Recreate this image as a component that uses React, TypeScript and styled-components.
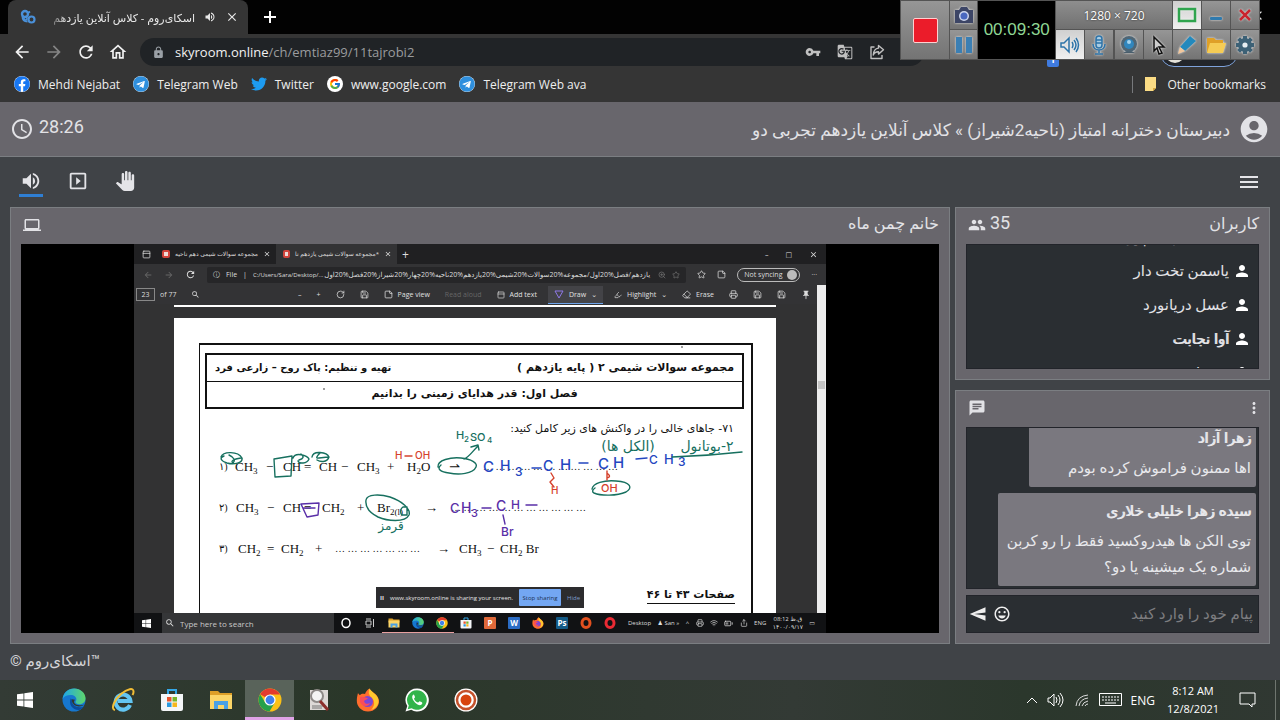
import React from 'react';
import styled, { createGlobalStyle, css } from 'styled-components';
import {
  MdAccessTime, MdAccountCircle, MdArrowBack, MdArrowForward, MdChat, MdClose, MdLaptop, MdLock,
  MdMenu, MdMoreVert, MdOutlineEmojiEmotions, MdOutlineHome, MdOutlineSlideshow, MdPanTool,
  MdPeople, MdPerson, MdPushPin, MdRefresh, MdSearch, MdSend, MdVolumeUp, MdVpnKey, MdGTranslate,
} from 'react-icons/md';
import { FaFacebook, FaTelegram, FaTwitter } from 'react-icons/fa';
import { FcGoogle } from 'react-icons/fc';
import {
  Eraser, Highlighter, Printer, RotateCw, Save, Share, Star, StickyNote, PanelTop, BatteryMedium, Wifi, ZoomIn,
} from 'lucide-react';

const Global = createGlobalStyle`
  *, *::before, *::after { box-sizing: border-box; }
  html, body, #root { height: 100%; margin: 0; }
  body { background: #404347; }
  button { padding: 0; border: 0; background: none; color: inherit; font: inherit; display: inline-flex; align-items: center; justify-content: center; }
  a { color: inherit; text-decoration: none; }
  svg { display: block; flex: none; }
`;

const ui = css`font-family: "Open Sans", "DejaVu Sans", sans-serif;`;
const sky = css`font-family: Roboto, "DejaVu Sans", sans-serif;`;

const Screen = styled.div`
  display: flex; flex-direction: column; height: 100vh; position: relative; overflow: hidden;
`;

/* ---------- browser chrome ---------- */
const TabStrip = styled.div`
  ${ui} display: flex; align-items: flex-end; flex: none; height: 34px; padding-left: 8px; background: #020202; color: #e8e8e8;
`;
const Tab = styled.div`
  display: flex; align-items: center; width: 240px; height: 34px; padding: 0 8px 0 12px;
  border-radius: 8px 8px 0 0; background: #353535; font-size: 11px;
`;
const TabTitle = styled.span`
  flex: 1; margin: 0 9px 0 8px; direction: rtl; white-space: nowrap; overflow: hidden;
  mask-image: linear-gradient(90deg, transparent, #000 24px);
`;
const TabButton = styled.button`width: 16px; height: 16px; margin-left: 8px; font-size: 14px;`;
const NewTab = styled.button`width: 32px; height: 34px; margin-left: 6px; font-size: 20px; color: #fff;`;
const WindowClose = styled.button`width: 45px; height: 30px; margin-left: auto; font-size: 15px; align-self: flex-start;`;

const NavBar = styled.div`
  ${ui} display: flex; align-items: center; flex: none; height: 36px; padding: 0 42px 0 12px; background: #353535; color: #eee;
`;
const NavButton = styled.button<{ $dim?: boolean }>`
  width: 20px; height: 28px; margin-right: 12px; font-size: 20px; color: ${p => (p.$dim ? '#858585' : '#f1f1f1')};
`;
const Address = styled.div`
  display: flex; align-items: center; flex: 0 1 784px; height: 28px; padding: 0 39px 0 12px; gap: 10px;
  border-radius: 14px; background: #202326; color: #9aa0a6; font-size: 13px;
`;
const Url = styled.span`flex: 1; b { font-weight: 400; color: #f1f1f1; } color: #9a9c9e;`;
const AddressIcons = styled.span`display: flex; gap: 16px; font-size: 16px; color: #c0c0c0;`;
const Extension = styled.span`
  width: 12px; height: 14px; margin: 16px 0 0 auto; border-radius: 2px; background: #3f7be0; color: #fff;
  font-size: 9px; line-height: 13px; text-align: center; font-weight: 700;
`;
const ProfilePill = styled.span`
  width: 78px; height: 28px; margin: 2px 0 0 101px; border: 1px solid #7fa3dc; border-radius: 14px; background: #23262b;
  &::before { content: ''; display: block; width: 20px; height: 20px; margin: 3px 4px; border-radius: 50%; background: #e6e3da; }
`;
const Bookmarks = styled.nav`
  ${ui} display: flex; align-items: center; flex: none; height: 32px; padding: 0 14px 4px; background: #353535; color: #eee; font-size: 12px;
`;
const Bookmark = styled.a`
  display: flex; align-items: center; gap: 8px; margin-right: 13px; white-space: nowrap;
  svg { width: 16px; height: 16px; }
`;
const Round = styled.span<{ $pad?: number }>`
  display: block; padding: ${p => p.$pad || 0}px; border-radius: 50%; background: #fff;
  svg { width: ${p => 16 - 2 * (p.$pad || 0)}px; height: ${p => 16 - 2 * (p.$pad || 0)}px; }
`;
const OtherBookmarks = styled(Bookmark)`
  margin: 0 0 0 auto; padding-left: 10px; border-left: 1px solid #77797c;
`;

/* ---------- screen recorder window ---------- */
const Recorder = styled.div`
  ${ui} position: absolute; top: 0; right: 20px; z-index: 5; width: 360px; height: 60px; padding: 1px; display: grid;
  grid-template-columns: 48px 27px 77px repeat(7, 28px); grid-template-rows: 28px 29px; gap: 1px;
  background: #545454; justify-content: space-between;
`;
const RecButton = styled.button<{ $lit?: boolean; $tall?: boolean }>`
  grid-row: ${p => (p.$tall ? 'span 2' : 'auto')};
  background: ${p => (p.$lit ? 'linear-gradient(#d0d0d0, #f0f0f0)' : 'linear-gradient(#969696, #747474)')};
  svg { width: 20px; height: 20px; filter: drop-shadow(0 0 1px #eee); }
`;
const StopSquare = styled.span`width: 25px; height: 25px; background: #eb1c2a; border: 1px solid #ffd0d0; border-radius: 2px;`;
const Timer = styled.time`
  grid-row: span 2; display: flex; align-items: center; justify-content: center; background: #000; color: #8fd694;
  font: 17px "Liberation Sans", sans-serif;
`;
const SizeLabel = styled.span`
  grid-column: span 4; display: flex; align-items: center; justify-content: center; color: #fff; font-size: 12px;
  background: linear-gradient(#8e8e8e, #707070); text-shadow: 0 0 2px #222;
`;

/* ---------- class room ---------- */
const Header = styled.header`
  ${sky} display: flex; align-items: center; justify-content: space-between; flex: none; height: 55px; padding: 0 10px;
  background: #68666c; border-bottom: 1px solid #7b7e82; color: #e2e2e6;
`;
const Elapsed = styled.span`
  display: flex; align-items: center; gap: 5px; font-size: 18px; line-height: 24px;
  svg { width: 24px; height: 24px; } span { padding-bottom: 4px; }
`;
const RoomTitle = styled.h1`
  display: flex; align-items: center; gap: 8px; margin: 0; font-size: 17px; font-weight: 400; white-space: nowrap;
  direction: rtl; svg { width: 32px; height: 32px; } span { padding-top: 2px; }
`;
const Tools = styled.div`
  display: flex; align-items: center; flex: none; height: 50px; padding: 0 19px; background: #404347; color: #e4e4e8;
`;
const ToolButton = styled.button<{ $active?: boolean }>`
  width: 24px; height: 30px; margin-right: 23px; border-bottom: 3px solid ${p => (p.$active ? '#2f7fd4' : 'transparent')};
  font-size: 22px;
`;
const MenuButton = styled.button`margin-left: auto; font-size: 24px;`;
const Main = styled.main`
  flex: 1; display: grid; grid-template-columns: minmax(0, 1fr) 315px; grid-template-rows: minmax(0, 1fr); gap: 5px; min-height: 0; padding: 0 10px;
`;
const Panel = styled.section<{ $grow?: boolean }>`
  ${sky} display: flex; flex-direction: column; flex: ${p => (p.$grow ? '1' : 'none')}; min-height: 0; padding: 0 10px 10px;
  border: 1px solid #7b7e82; background: #68666c; color: #e2e2e6;
`;
const PanelHead = styled.div`
  display: flex; align-items: center; justify-content: space-between; height: 36px; flex: none; padding: 0 0 3px 2px; font-size: 17px;
`;
const PanelTitle = styled.h2`margin: 0; padding-bottom: 2px; font-size: 16px; font-weight: 400;`;
const Count = styled.span`
  display: flex; align-items: center; gap: 4px; font-size: 18px; line-height: 22px;
  svg { width: 18px; height: 18px; } span { padding-bottom: 4px; }
`;
const Side = styled.div`display: flex; flex-direction: column; gap: 10px; min-height: 0;`;
const UserList = styled.ul`
  display: flex; flex-direction: column; justify-content: center; height: 125px; margin: 0; padding: 0 7px 4px;
  border: 1px solid #22242a; background: #2a2e32; overflow: hidden; list-style: none; direction: rtl;
`;
const User = styled.li<{ $me?: boolean }>`
  display: flex; align-items: center; flex: none; gap: 4px; height: 34px; font-size: 15px;
  text-shadow: ${p => (p.$me ? '1px 0 currentColor' : 'none')};
  svg { width: 18px; height: 18px; color: #fff; }
`;
const IconButton = styled.button<{ $w: number }>`width: ${p => p.$w}px; font-size: 18px;`;
const Messages = styled.div`
  flex: 1; display: flex; flex-direction: column; justify-content: flex-end; align-items: flex-end; gap: 6px; min-height: 0;
  padding: 0 2px 2px; overflow: hidden; border: 1px solid #22242a; background: #2a2e32;
`;
const Bubble = styled.article<{ $wide?: boolean }>`
  flex: none; width: ${p => (p.$wide ? 258 : 227)}px; padding: 5px 5px 6px; border-radius: 2px; background: #7a787f; direction: rtl;
  font-size: 15px; line-height: 26px; white-space: nowrap; color: #e8e8ec;
  strong { display: block; margin-bottom: 4px; font-weight: 400; text-shadow: 1px 0 currentColor; }
`;
const Compose = styled.form`
  display: flex; align-items: center; gap: 6px; height: 38px; flex: none; margin-top: 6px; padding: 0 2px;
  border: 1px solid #22242a; background: #2a2e32; color: #eee; font-size: 18px;
`;
const MessageInput = styled.input`
  ${sky} flex: 1; min-width: 0; height: 30px; padding: 0 3px; border: 0; background: none; outline: 0; direction: rtl; color: #eee;
  font-size: 15px; &::placeholder { color: #7d7d80; opacity: 1; }
`;
const Flip = styled.span`display: flex; transform: scaleX(-1);`;
const Footer = styled.footer`${sky} flex: none; height: 36px; padding: 0 10px; line-height: 34px; font-size: 15px; color: #d4d4d8;`;

/* ---------- shared desktop ---------- */
const Video = styled.div`flex: 1; display: flex; justify-content: center; min-height: 0; background: #000; overflow: hidden;`;
const Shared = styled.div`
  ${ui} position: relative; display: flex; flex-direction: column; width: 692px; max-width: 100%; background: #323233;
  color: #ddd; font-size: 7px; white-space: nowrap; overflow: hidden;
`;
const EdgeTabs = styled.div`
  display: flex; align-items: center; height: 20px; flex: none; padding: 0 8px; background: #202022;
`;
const EdgeTab = styled.div<{ $on?: boolean }>`
  display: flex; align-items: center; gap: 5px; width: 121px; height: 20px; padding: 0 5px 0 7px; font-size: 6px;
  background: ${p => (p.$on ? '#333335' : 'transparent')};
  span { flex: 1; direction: rtl; }
`;
const FirstTab = styled(EdgeTab)`margin-left: 4px;`;
const AddTab = styled.button`margin: 0 auto 0 5px; font-size: 12px;`;
const WinControls = styled.span`display: flex; align-items: center; gap: 17px;`;
const Pdf = styled.i`width: 8px; height: 8px; border-radius: 2px; background: #f0dcd8; border: 2px solid #d2443c;`;
const Push = styled.span`margin-left: auto;`;
const EdgeBar = styled.div`
  display: flex; align-items: center; gap: 11px; height: 21px; flex: none; padding: 0 9px; background: #333335;
`;
const EdgeUrl = styled.div`
  flex: 1; display: flex; align-items: center; gap: 6px; height: 16px; padding: 0 6px; border-radius: 2px; background: #262628;
  small { font-size: 6px; } bdi { margin: 0 auto 0 -5px; }
`;
const Sync = styled.button`
  height: 14px; padding: 0 2px 0 6px; gap: 5px; border: 1px solid #bbb; border-radius: 7px;
  i { width: 10px; height: 10px; border-radius: 50%; background: #bbb; }
`;
const Reader = styled.div`position: relative; flex: 1; display: flex; min-height: 0;`;
const ReaderBody = styled.div`flex: 1; min-width: 0; display: flex; flex-direction: column; overflow: hidden;`;
const PdfBar = styled.div`
  display: flex; align-items: center; gap: 15px; height: 19px; flex: none; padding: 0 6px 0 2px; background: #333335;
`;
const PageNo = styled.input`
  width: 19px; height: 13px; margin-right: -10px; padding: 0; border: 1px solid #888; background: none; color: #ddd; text-align: center; font: inherit;
`;
const PdfTool = styled.button<{ $on?: boolean; $dim?: boolean }>`
  gap: 5px; height: 18px; padding: 0 ${p => (p.$on ? 6 : 0)}px; margin: 0 ${p => (p.$on ? -4 : 0)}px; color: ${p => (p.$dim ? '#666' : '#e0e0e0')};
  background: ${p => (p.$on ? '#434347' : 'none')}; border-bottom: ${p => (p.$on ? '1px solid #6ea4ea' : '0')};
`;
const Scroll = styled.div`
  display: flex; width: 9px; background: #ededed; padding: 96px 1px 0;
  &::before { content: ''; width: 7px; height: 8px; background: #c4c4c4; }
`;
const PrevPage = styled.div`height: 2px; flex: none; margin: 1px 41px 11px 40px; background: #fff;`;
const Sheet = styled.div`flex: 1; margin: 0 41px 0 40px; padding: 25px 23px 0 25px; background: #fff; color: #111; min-height: 0;`;
const Frame = styled.div`height: 100%; padding: 8px 7px 0 5px; border: solid #111; border-width: 2px 2px 0 1px;`;
const TitleBox = styled.div`border: 2px solid #111; font: 700 11px "DejaVu Sans", sans-serif; direction: rtl;`;
const TitleRow = styled.div<{ $center?: boolean }>`
  display: flex; align-items: center; justify-content: ${p => (p.$center ? 'center' : 'space-between')}; height: 26px; padding: 0 8px 2px;
  & + & { border-top: 1px solid #111; }
  small { font-size: 10px; }
`;
const Question = styled.p`margin: 6px 10px 0; font: 11px/28px "DejaVu Sans", sans-serif; direction: rtl;`;
const Equations = styled.div`display: flex; flex-direction: column; gap: 21px; margin: 14px 0 27px 14px;`;
const Equation = styled.div<{ $cols: string }>`
  display: grid; grid-template-columns: ${p => p.$cols}; height: 20px; line-height: 20px;
  font-family: "Liberation Serif", "DejaVu Sans", serif; font-size: 13px;
  sub { font-size: 9px; line-height: 0; vertical-align: -3px; }
`;
const Dots = styled.span`font-size: 10px;`;
const Pages = styled.p`margin: 0 9px 0 0; text-align: right; direction: rtl; font: 700 11px/18px "DejaVu Sans", sans-serif; span { border-bottom: 1px solid #111; padding-bottom: 2px; }`;
const Ink = styled.svg`position: absolute; left: 0; top: 0; width: 692px; height: 389px; pointer-events: none;`;
const ShareBar = styled.div`
  position: absolute; left: 242px; top: 343px; display: flex; align-items: center; gap: 6px; width: 208px; height: 21px; padding: 0 4px;
  background: #2c2c2e; color: #e6e6e6; font-size: 6px;
`;
const StopShare = styled.button`width: 52px; height: 17px; margin-left: auto; background: #73a7f3; color: #1d3050; border-radius: 1px;`;
const Hide = styled.button`width: 14px; color: #7e9ccc;`;
const MiniTaskbar = styled.div`
  display: flex; align-items: center; height: 20px; flex: none; background: #111214; padding-left: 8px; color: #ddd;
`;
const MiniSearch = styled.label`
  display: flex; align-items: center; gap: 5px; width: 172px; height: 20px; margin-left: 11px; padding: 0 3px; background: #353638;
  input { ${ui} width: 130px; padding: 0; border: 0; background: none; font-size: 8px; &::placeholder { color: #c8c8c8; opacity: 1; } }
`;
const MiniApp = styled.button<{ $open?: boolean }>`
  width: 24px; height: 20px; flex: none; border-bottom: 1px solid ${p => (p.$open ? '#e8a0a0' : 'transparent')};
  svg { width: 12px; height: 12px; }
`;
const MiniTray = styled.div`display: flex; align-items: center; flex: 1; justify-content: space-between; padding: 0 11px 0 6px; font-size: 6px;`;
const MiniClock = styled.span`line-height: 8px; text-align: center;`;

/* ---------- windows taskbar ---------- */
const Taskbar = styled.div`
  font-family: "Open Sans", sans-serif; display: flex; align-items: center; height: 40px; flex: none; padding-right: 4px;
  background: linear-gradient(90deg, #333b35, #2a3729 28%, #333a35 62%, #2b372c 80%, #303832); color: #fff;
`;
const App32 = styled.button<{ $on?: boolean }>`
  width: 49px; height: 40px; border-bottom: 3px solid ${p => (p.$on ? '#e0a3e8' : 'transparent')};
  border-top: 3px solid transparent; background: ${p => (p.$on ? '#59635a' : 'none')};
  svg { width: 24px; height: 24px; }
`;
const Tray = styled.div`
  display: flex; align-items: center; margin-left: auto; gap: 9px; height: 40px; padding-right: 19px; border-right: 1px solid #6f766f; font-size: 12px;
`;
const Clock = styled.time`width: 66px; margin: 0 4px 0 -4px; text-align: center; line-height: 18px; font-size: 11px;`;

/* ---------- drawings ---------- */
const SkyroomLogo = () => (
  <svg width="16" height="16" viewBox="0 0 16 16" fill="none" stroke="#4a90d9">
    <circle cx="5" cy="5" r="3" strokeWidth="2.400" /><circle cx="11.500" cy="10.500" r="3" strokeWidth="2.200" />
    <path d="M2.500 7c0 3.500 2 5.500 5 5.500M8 4l2-1.500" strokeWidth="2" /><circle cx="5.500" cy="9.500" r="1.500" strokeWidth="1.500" />
  </svg>
);
const ShareArrow = () => (
  <svg width="16" height="16" viewBox="0 0 16 16" fill="none" stroke="#c0c0c0" strokeWidth="1.400" strokeLinejoin="round">
    <path d="M5.500 3H2v11.500h11V11M9.500 1.500l5 4.300-5 4.300V7.700C7 7.600 5.300 8.600 4.300 11c.2-3.800 2-6.500 5.200-6.900z" />
  </svg>
);
const Win = ({ s = 16 }: { s?: number }) => (
  <svg style={{ width: s, height: s }} viewBox="0 0 16 16" fill="#fff"><path d="M0 2.300 6.500 1.400v6.200H0zM7.300 1.300 16 0v7.600H7.300zM0 8.400h6.500v6.200L0 13.700zM7.300 8.400H16V16l-8.700-1.200z" /></svg>
);
const Edge = () => (
  <svg viewBox="0 0 24 24">
    <defs><linearGradient id="eg" x1="0" x2="1"><stop stopColor="#1ea6e8" /><stop offset="1" stopColor="#5fd66b" /></linearGradient></defs>
    <circle cx="12" cy="12" r="11.500" fill="#1677cf" />
    <path d="M.6 11C1.500 4.500 6.500.5 12.200.5 18.500.5 23.500 5 23.500 10.200c0 3.600-2.600 6-6 6-2.600 0-4.200-1-4-2.200.3-1 .9-1.300.9-2.700C14.400 9 12 7 8.800 7 5 7 1.800 8.600.6 11z" fill="url(#eg)" />
    <path d="M8.600 10.500c-2.300 6 2 11.500 8 11.400 2.200-.1 4.200-1.800 5.200-3.500-6 2.600-12.800-.8-11.800-6.800z" fill="#0c4c9c" />
    <path d="M10 11.200c-.6 2.500 1 6.500 6.500 7.200 2.600.2 4.600-.8 5.800-2-1.400.7-3 .8-4.800.8-4.200 0-7-2.600-4.500-5.400z" fill="#30382f" />
  </svg>
);
const Explorer = () => (
  <svg viewBox="0 0 24 24"><path d="M1 3h8l2 2h12v6H1z" fill="#dd9f28" /><path d="M1 7h22v14H1z" fill="#fbd568" /><path d="M5 13h14v8h-4v-4H9v4H5z" fill="#4aa0e4" /></svg>
);
const Chrome = () => (
  <svg viewBox="0 0 24 24">
    <circle cx="12" cy="12" r="11.500" fill="#fbc116" /><path d="M12 12 2.100 6.200A11.500 11.500 0 0 1 22 6.500H12z" fill="#e33b2e" />
    <path d="M2.100 6.200A11.500 11.500 0 0 0 11.500 23.500L16.500 15 7.200 14.500z" fill="#25a04b" />
    <circle cx="12" cy="12" r="5.600" fill="#fff" /><circle cx="12" cy="12" r="4.400" fill="#3f80ea" />
  </svg>
);
const Firefox = () => (
  <svg viewBox="0 0 24 24">
    <path d="M2 5c.5 1 1.400 1.500 1.800 2.200C6 5 8 6 9 6c1-3 3-4.600 4.500-5.500C14 4 22 5 23 12.500c.4 6-4.500 11-11 11S.6 18.500.8 12.500C.9 9 1.500 7 2 5z" fill="#ff6d2d" />
    <path d="M13.500.5C16 5 23 7 22.500 14c-.5 4-3.500 7-7.500 8 4-4 4-9 1-12-2-2-4.500-4-2.500-9.500z" fill="#ffc72e" />
    <circle cx="11.500" cy="13.500" r="5.500" fill="#7a46d6" /><path d="M4 9c3-1 5 .5 8 1-1 2-3 1.500-4 3 .5 3 4 3.500 6 2-1 4-8 4-10-1z" fill="#f94d59" />
  </svg>
);
const Store = () => (
  <svg viewBox="0 0 24 24"><path d="M8 6V2h8v4" fill="none" stroke="#35a8e8" strokeWidth="2" /><path d="M1 6h22v15q0 2-2 2H3q-2 0-2-2z" fill="#f4f6f8" /><path d="M7 9h4.500v4.500H7z" fill="#e8532b" /><path d="M12.500 9H17v4.500h-4.500z" fill="#75b52a" /><path d="M7 14.500h4.500V19H7z" fill="#2a9ae0" /><path d="M12.500 14.500H17V19h-4.500z" fill="#f6b71c" /></svg>
);
const Explorer11 = () => (
  <svg viewBox="0 0 24 24" fill="none">
    <path d="M19 17A7.500 7.500 0 1 1 19.500 13H7" stroke="#63c6f3" strokeWidth="4" />
    <path d="M4 22C-1 21 4 11 10 6S23-1 22.500 4c0 1-.4 2-1 3" stroke="#f2bd35" strokeWidth="2" />
  </svg>
);
const Magnify = () => (
  <svg viewBox="0 0 24 24"><path d="M3 2h18v20H3z" fill="#ddd9d7" /><path d="M5 18h14M5 20h10" stroke="#777" /><circle cx="10" cy="8" r="6" fill="#f4f4f4" stroke="#8e8a88" strokeWidth="2" /><path d="m13 13 8 9" stroke="#8c2f2c" strokeWidth="3" /></svg>
);
const RecordLogo = () => (
  <svg viewBox="0 0 24 24"><circle cx="12" cy="12" r="11.500" fill="#fff" /><circle cx="12" cy="12" r="9" fill="none" stroke="#c4512b" strokeWidth="2.500" /><circle cx="12" cy="12" r="5.500" fill="#d8440e" /></svg>
);
const WhatsApp = () => (
  <svg viewBox="0 0 24 24"><path d="M12 .5A11.400 11.400 0 0 0 2.300 18L.5 23.500l5.800-1.700A11.500 11.500 0 1 0 12 .5z" fill="#fff" /><path d="M12 2.200A9.800 9.800 0 0 0 3.800 17.500l-1.100 3.800 3.900-1.100A9.800 9.800 0 1 0 12 2.200z" fill="#32b44b" /><path d="M8.600 6.600c-3 2-.6 6.300 2.200 8.700 2.800 2.300 5.500 2.800 6.600 0 .2-1-1.500-1.600-2.600-2.100-.8-.2-1.100 1.500-1.900 1.300-1.700-.7-3-2-3.800-3.600-.1-.7 1-1 .9-1.800-.4-1-.7-2.400-1.400-2.500z" fill="#fff" /></svg>
);
const Letter = ({ t, c }: { t: string; c: string }) => (
  <svg viewBox="0 0 12 12"><rect width="12" height="12" rx="1" fill={c} /><text x="6" y="9" fontSize="8" fontWeight="700" textAnchor="middle" fill="#fff">{t}</text></svg>
);
const Ring = ({ c, w = 3 }: { c: string; w?: number }) => (
  <svg viewBox="0 0 12 12"><ellipse cx="6" cy="6" rx="4" ry="4.500" fill="none" stroke={c} strokeWidth={w} /></svg>
);

const G = '#17705f', B = '#2346c0', R = '#d5412c', P = '#5a2fa8';
type Mark = [string, number, number, number, string];
const marks: Mark[] = [
  ['H', 456, 439, 11, G], ['2', 464, 442, 8, G], ['SO', 470, 441, 11, G], ['4', 487, 443, 8, G],
  ['H', 395, 459, 10, R], ['OH', 415, 459, 10, R],
  ['C', 483, 472, 15, B], ['H', 500, 471, 14, B], ['3', 515, 476, 12, B], ['C', 543, 471, 14, B], ['H', 560, 470, 15, B],
  ['C', 598, 469, 15, B], ['H', 613, 468, 15, B], ['C', 649, 464, 12, B], ['H', 664, 464, 13, B], ['3', 678, 466, 12, B],
  ['H', 551, 494, 10, R], ['OH', 601, 492, 11, R],
  ['C', 450, 513, 13, P], ['H', 461, 513, 14, P], ['3', 471, 517, 11, P], ['C', 496, 511, 14, P], ['H', 511, 509, 12, P], ['Br', 501, 536, 12, P],
];

const Annotations = () => (
  <Ink viewBox="134 244 692 389" fill="none" strokeWidth="1.400" strokeLinecap="round" strokeLinejoin="round">
    <g fontFamily="Inter, sans-serif" fontWeight="500">
      {marks.map(([t, x, y, s, c], i) => <text key={i} x={x} y={y} fontSize={s} fill={c}>{t}</text>)}
    </g>
    <g fontFamily="DejaVu Sans" fill={G} textAnchor="middle" direction="rtl">
      <text x="628" y="451" fontSize="14">(الکل ها)</text>
      <text x="707" y="451" fontSize="14">۲-بوتانول</text>
      <text x="391" y="530" fontSize="12">قرمز</text>
    </g>
    <g stroke={G}>
      <path d="M672 457q35-1 70-5M221 457c2-6 17-6 21 1 1 5-8 7-15 5-6-2-8-5-3-7M229 455q8 4 4 8-4-3 8-5" />
      <path d="m274 459 18-3-1 20-16 1zM293 458c2-6 14-3 16 1-2 5-10 5-11 2M301 454q5 4-2 6M312 457c1-7 15-5 17 0-2 6-9 5-12 3M320 453q-6 6-1 5l9-1" />
      <path d="M438 467c-1-7 13-10 23-9s17 5 15 9c-3 7-17 8-27 6-8-1-13-4-8-8M464 459c4-1 7-6 14-13m-7 1 7-2 1 5" />
      <path d="M592 489c1-6 12-9 24-8 15 1 17 7 10 11-9 4-25 4-32 1-2-1-2-3 1-5" />
      <path d="M366 500c1-6 14-6 24-3 12 4 21 12 19 18-4 8-22 6-31 2-8-4-13-10-12-17M403 507h4v8h-5c-2-2-2-6 1-8" />
    </g>
    <path d="M532 468h9M579 463h9M636 459l11-1" stroke={B} />
    <path d="M405 456h7M551 473l3 5-4 4 4 5M607 471v9m0-7q5 4 0 5" stroke={R} />
    <path d="m301 504 18-1-1 12-11 2zM304 508h11M482 508h9M526 505h11M503 515l2 9" stroke={P} />
    <circle cx="682" cy="347" r=".8" fill="#222" /><circle cx="324" cy="389" r=".8" fill="#222" />
  </Ink>
);

const SharedDesktop = () => (
  <Shared>
    <EdgeTabs>
      <PanelTop size={9} />
      <FirstTab><Pdf /><span>مجموعه سوالات شیمی دهم ناحیه</span><MdClose size={8} /></FirstTab>
      <EdgeTab $on><Pdf /><span>*مجموعه سوالات شیمی یازدهم نا</span><MdClose size={8} /></EdgeTab>
      <AddTab>+</AddTab>
      <WinControls><span>–</span><span>□</span><MdClose size={9} /></WinControls>
    </EdgeTabs>
    <EdgeBar>
      <MdArrowBack size={10} color="#666" /><MdArrowForward size={10} color="#666" /><MdRefresh size={11} />
      <EdgeUrl>
        <span>ⓘ</span><span>File</span><span>|</span><small>C:/Users/Sara/Desktop/...</small>
        <bdi dir="rtl">یازدهم/فصل%20اول/مجموعه%20سوالات%20شیمی%20یازدهم%20ناحیه%20چهار%20شیراز%20فصل%20اول</bdi>
        <ZoomIn size={8} color="#777" /><Star size={8} color="#777" />
      </EdgeUrl>
      <Star size={9} /><StickyNote size={9} /><Sync>Not syncing <i /></Sync><span>···</span>
    </EdgeBar>
    <Reader>
      <ReaderBody>
        <PdfBar>
          <PageNo aria-label="Page" defaultValue="23" /><span>of 77</span><MdSearch size={9} />
          <Push>–</Push><span>+</span><RotateCw size={9} /><Save size={9} />
          <PdfTool><StickyNote size={9} /> Page view</PdfTool><PdfTool $dim>Read aloud</PdfTool>
          <PdfTool><PanelTop size={8} /> Add text</PdfTool><PdfTool $on><svg width="10" height="9" viewBox="0 0 10 9" fill="none" stroke="#8f78e8"><path d="M1 1h8L5 8z" /></svg> Draw <span>⌄</span></PdfTool>
          <PdfTool><Highlighter size={8} /> Highlight <span>⌄</span></PdfTool><PdfTool><Eraser size={9} /> Erase</PdfTool>
          <Printer size={9} /><Save size={9} /><Save size={9} /><MdPushPin size={10} />
        </PdfBar>
        <PrevPage />
        <Sheet>
          <Frame>
            <TitleBox>
              <TitleRow><span>مجموعه سوالات شیمی ۲ ( پایه یازدهم )</span><small>تهیه و تنظیم: پاک روح – زارعی فرد</small></TitleRow>
              <TitleRow $center>فصل اول: قدر هدایای زمینی را بدانیم</TitleRow>
            </TitleBox>
            <Question>۷۱- جاهای خالی را در واکنش های زیر کامل کنید:</Question>
            <Equations>
              <Equation $cols="16px 31px 17px 21px 15px 22px 16px 30px 20px 42px 34px 1fr">
                <Dots>۱)</Dots><span>CH<sub>3</sub></span><span>−</span><span>CH</span><span>=</span><span>CH</span><span>−</span><span>CH<sub>3</sub></span><span>+</span><span>H<sub>2</sub>O</span><span>⇀</span><Dots>… … … … … … … … … … …</Dots>
              </Equation>
              <Equation $cols="17px 31px 16px 21px 18px 35px 20px 48px 26px 1fr">
                <Dots>۲)</Dots><span>CH<sub>3</sub></span><span>−</span><span>CH</span><span>=</span><span>CH<sub>2</sub></span><span>+</span><span>Br<sub>2(l)</sub></span><span>→</span><Dots>… … … … … … … … … … …</Dots>
              </Equation>
              <Equation $cols="19px 29px 14px 34px 20px 102px 22px 28px 13px 1fr">
                <Dots>۳)</Dots><span>CH<sub>2</sub></span><span>=</span><span>CH<sub>2</sub></span><span>+</span><Dots>… … … … … … …</Dots><span>→</span><span>CH<sub>3</sub></span><span>−</span><span>CH<sub>2</sub> Br</span>
              </Equation>
            </Equations>
            <Pages><span>صفحات ۴۳ تا ۴۶</span></Pages>
          </Frame>
        </Sheet>
      </ReaderBody>
      <Scroll />
    </Reader>
    <MiniTaskbar>
      <Win s={9} />
      <MiniSearch><MdSearch size={10} /><input aria-label="Search" placeholder="Type here to search" /></MiniSearch>
      <MiniApp><Ring c="#fff" w={1.5} /></MiniApp><MiniApp><svg viewBox="0 0 12 12" stroke="#ccc" fill="none"><path d="M2 4h5v4H2zM2 2h5M2 10h5M9.500 2v8" /></svg></MiniApp>
      <MiniApp $open><Explorer /></MiniApp><MiniApp $open><Edge /></MiniApp><MiniApp $open><Chrome /></MiniApp><MiniApp><Store /></MiniApp>
      <MiniApp><Letter t="P" c="#e0693a" /></MiniApp><MiniApp><Letter t="W" c="#2b6cc4" /></MiniApp><MiniApp><Firefox /></MiniApp>
      <MiniApp><Letter t="Ps" c="#135a86" /></MiniApp><MiniApp><Ring c="#e2501f" /></MiniApp><MiniApp><Ring c="#ea2a33" /></MiniApp>
      <MiniTray><span>Desktop</span><span>♟ San »</span><span>^</span><Printer size={8} /><Wifi size={8} /><BatteryMedium size={9} /><Share size={8} /><span>ENG</span><MiniClock>08:12 ق.ظ<br />۱۴۰۰/۰۹/۱۷</MiniClock><span>▭</span></MiniTray>
    </MiniTaskbar>
    <Annotations />
    <ShareBar><b>II</b><span>www.skyroom.online is sharing your screen.</span><StopShare>Stop sharing</StopShare><Hide>Hide</Hide></ShareBar>
  </Shared>
);

const users = ['فاطمه مهدی پور', 'یاسمن تخت دار', 'عسل دریانورد', 'آوا نجابت', 'مهسا محمدی حقیقت'];

const BlueStroke = ({ children }: { children: React.ReactNode }) => (
  <svg viewBox="0 0 20 20" fill="none" stroke="#2d73a8" strokeWidth="1.500">{children}</svg>
);

export default function App() {
  return (
    <Screen>
      <Global />
      <TabStrip>
        <Tab>
          <SkyroomLogo /><TabTitle>اسکای‌روم - کلاس آنلاین یازدهم</TabTitle><MdVolumeUp size={12} />
          <TabButton aria-label="Close tab"><MdClose /></TabButton>
        </Tab>
        <NewTab aria-label="New tab"><svg width="12" height="12" stroke="#fff" strokeWidth="2"><path d="M6 0v12M0 6h12" /></svg></NewTab>
        <WindowClose aria-label="Close window"><MdClose /></WindowClose>
      </TabStrip>
      <NavBar>
        <NavButton aria-label="Back"><MdArrowBack /></NavButton><NavButton $dim aria-label="Forward"><MdArrowForward /></NavButton>
        <NavButton aria-label="Reload"><MdRefresh /></NavButton><NavButton aria-label="Home"><MdOutlineHome /></NavButton>
        <Address>
          <MdLock size={13} /><Url><b>skyroom.online</b>/ch/emtiaz99/11tajrobi2</Url>
          <AddressIcons><MdVpnKey /><MdGTranslate /><ShareArrow /></AddressIcons>
        </Address>
        <Extension>i</Extension><ProfilePill />
      </NavBar>
      <Bookmarks>
        <Bookmark href="#"><Round><FaFacebook color="#1877f2" /></Round>Mehdi Nejabat</Bookmark>
        <Bookmark href="#"><Round><FaTelegram color="#2f8fdd" /></Round>Telegram Web</Bookmark>
        <Bookmark href="#"><FaTwitter color="#1d9bf0" />Twitter</Bookmark>
        <Bookmark href="#"><Round $pad={2}><FcGoogle /></Round>www.google.com</Bookmark>
        <Bookmark href="#"><Round><FaTelegram color="#2f8fdd" /></Round>Telegram Web ava</Bookmark>
        <OtherBookmarks href="#"><svg viewBox="0 0 16 16"><path d="M2 1h11v11l-3 3H2z" fill="#fbdc85" /><path d="M10 15v-3h3z" fill="#d9a93c" /></svg>Other bookmarks</OtherBookmarks>
      </Bookmarks>

      <Recorder>
        <RecButton $tall aria-label="Stop"><StopSquare /></RecButton>
        <RecButton aria-label="Snapshot"><svg viewBox="0 0 20 20"><path d="M1 5h4l2-3h6l2 3h4v13H1z" fill="#3c4566" /><circle cx="10" cy="11" r="5" fill="#cdd6ee" /><circle cx="10" cy="11" r="3.500" fill="#4a68c0" /></svg></RecButton>
        <Timer>00:09:30</Timer>
        <SizeLabel>1280 × 720</SizeLabel>
        <RecButton $lit aria-label="Area"><svg viewBox="0 0 20 20" fill="none"><path d="M2 4h16v12H2z" stroke="#2fa44e" strokeWidth="2.500" /></svg></RecButton>
        <RecButton aria-label="Minimise"><svg viewBox="0 0 20 20"><rect x="4" y="12" width="12" height="3" rx="1" fill="#2f7aae" /></svg></RecButton>
        <RecButton aria-label="Close"><svg viewBox="0 0 20 20" stroke="#c9242e" strokeWidth="2.500"><path d="m5 5 10 10M15 5 5 15" /></svg></RecButton>
        <RecButton aria-label="Pause"><svg viewBox="0 0 20 20" fill="#3b7fb4"><path d="M2 2h6v16H2zM12 2h6v16h-6z" /></svg></RecButton>
        <RecButton $lit aria-label="Sound"><BlueStroke><path d="M1 8h3l5-5v14l-5-5H1zM12 7q2 3 0 6M14 5q4 5 0 10M16 3q5 7 0 14" /></BlueStroke></RecButton>
        <RecButton aria-label="Microphone"><BlueStroke><rect x="7" y="1" width="6" height="12" rx="3" fill="#a9cde4" /><path d="M4 9c0 8 12 8 12 0M10 15v3M6 19h8M7 5h6M7 8h6" /></BlueStroke></RecButton>
        <RecButton aria-label="Webcam"><svg viewBox="0 0 20 20"><path d="M4 18q6-5 12 0z" fill="#4a5e6c" /><circle cx="10" cy="9" r="8" fill="#4f6675" /><circle cx="10" cy="9" r="5" fill="#3086bd" /><circle cx="10" cy="7" r="2" fill="#a4d3ec" /></svg></RecButton>
        <RecButton aria-label="Cursor"><svg viewBox="0 0 20 20" fill="#ccc" stroke="#111" strokeWidth="1.500"><path d="m6 2 10 10h-5l3 6-3 1-2-6-3 3z" /></svg></RecButton>
        <RecButton aria-label="Draw"><svg viewBox="0 0 20 20"><path d="M3 12 13 1l6 5L8 16z" fill="#2389bd" /><path d="m3 12-2 7 7-3z" fill="#f2c79c" /></svg></RecButton>
        <RecButton aria-label="Folder"><svg viewBox="0 0 20 20"><path d="M1 3h7l2 2h7v12H1z" fill="#dfa027" /><path d="M4 8h16l-3 10H1z" fill="#f5cc55" /></svg></RecButton>
        <RecButton aria-label="Settings"><svg viewBox="0 0 20 20" fill="none" stroke="#3d6176"><path d="M10 1v18M1 10h18M3.600 3.600l12.800 12.800M16.400 3.600 3.600 16.400" strokeWidth="4" /><circle cx="10" cy="10" r="5" strokeWidth="4" /><circle cx="10" cy="10" r="2.600" fill="#e6eef2" stroke="none" /></svg></RecButton>
      </Recorder>

      <Header>
        <Elapsed><MdAccessTime /><span>28:26</span></Elapsed>
        <RoomTitle><MdAccountCircle /><span>دبیرستان دخترانه امتیاز (ناحیه2شیراز) » کلاس آنلاین یازدهم تجربی دو</span></RoomTitle>
      </Header>
      <Tools>
        <ToolButton $active aria-label="Sound"><MdVolumeUp /></ToolButton><ToolButton aria-label="Play"><MdOutlineSlideshow /></ToolButton>
        <ToolButton aria-label="Raise hand"><MdPanTool size={20} /></ToolButton><MenuButton aria-label="Menu"><MdMenu /></MenuButton>
      </Tools>
      <Main>
        <Panel>
          <PanelHead><MdLaptop size={18} /><PanelTitle dir="rtl">خانم چمن ماه</PanelTitle></PanelHead>
          <Video><SharedDesktop /></Video>
        </Panel>
        <Side>
          <Panel>
            <PanelHead><Count><MdPeople /><span>35</span></Count><PanelTitle>کاربران</PanelTitle></PanelHead>
            <UserList>{users.map((u, i) => <User key={u} $me={i === 3}><MdPerson />{u}</User>)}</UserList>
          </Panel>
          <Panel $grow>
            <PanelHead><IconButton $w={18} aria-label="Chat"><MdChat /></IconButton><IconButton $w={10} aria-label="More"><MdMoreVert /></IconButton></PanelHead>
            <Messages>
              <Bubble><strong>زهرا آزاد</strong>اها ممنون فراموش کرده بودم</Bubble>
              <Bubble $wide><strong>سیده زهرا خلیلی خلاری</strong>توی الکن ها هیدروکسید فقط را رو کربن<br />شماره یک میشینه یا دو؟</Bubble>
            </Messages>
            <Compose>
              <button type="button" aria-label="Send"><Flip><MdSend /></Flip></button>
              <button type="button" aria-label="Emoji"><MdOutlineEmojiEmotions /></button>
              <MessageInput aria-label="پیام" placeholder="پیام خود را وارد کنید" />
            </Compose>
          </Panel>
        </Side>
      </Main>
      <Footer>© اسکای‌روم™</Footer>

      <Taskbar>
        <App32 aria-label="Start"><Win /></App32><App32 aria-label="Edge"><Edge /></App32><App32 aria-label="Internet Explorer"><Explorer11 /></App32>
        <App32 aria-label="Store"><Store /></App32><App32 aria-label="Files"><Explorer /></App32><App32 $on aria-label="Chrome"><Chrome /></App32>
        <App32 aria-label="Magnifier"><Magnify /></App32><App32 aria-label="Firefox"><Firefox /></App32>
        <App32 aria-label="WhatsApp"><WhatsApp /></App32>
        <App32 aria-label="Recorder"><RecordLogo /></App32>
        <Tray>
          <svg width="12" height="8" fill="none" stroke="#fff"><path d="m1 7 5-5 5 5" /></svg>
          <svg width="18" height="16" viewBox="0 0 18 16" fill="none" stroke="#fff"><path d="M1 6h2l4-4v12l-4-4H1zM9 5q2 3 0 6M11 3q4 5 0 10M13 1q6 7 0 14" /></svg>
          <svg width="16" height="14" viewBox="0 0 16 14" fill="none" stroke="#ddd"><path d="M2 13Q3 3 14 2M5 13Q6 6 14 5M8 13q1-4 6-5M11 13q1-2 3-2" /></svg>
          <svg width="23" height="14" viewBox="0 0 23 14" fill="none" stroke="#fff"><path d="M.5.5h22v12H.5z" /><path d="M3 4h17M3 7h17" strokeDasharray="2 1" /><path d="M6 10h11" /></svg>
          <span>ENG</span><Clock>8:12 AM<br />12/8/2021</Clock>
          <svg width="17" height="18" viewBox="0 0 17 18" fill="none" stroke="#fff"><path d="M1 2h15v11h-3v3l-3-3H1z" /></svg>
        </Tray>
      </Taskbar>
    </Screen>
  );
}
